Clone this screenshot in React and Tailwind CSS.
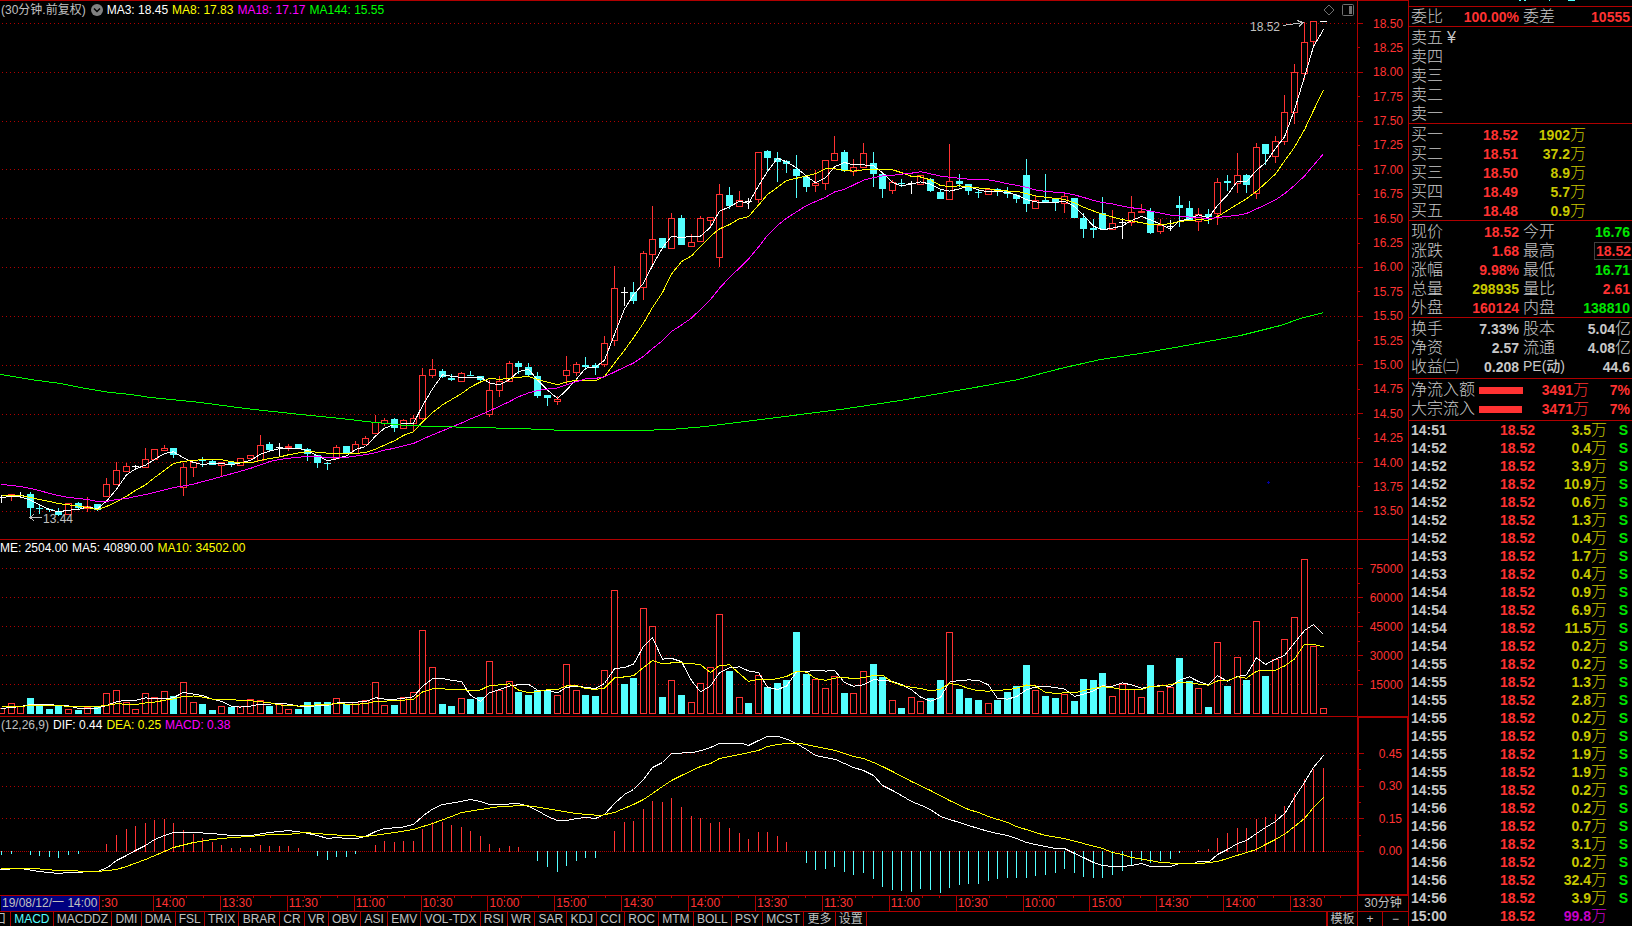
import { useState } from "react";

const RED = "#ff3232";
const CYAN = "#54ffff";
const GRID = "#b00000";
const STEP = 9.578;

// kind, body top, body bottom, high, low, volume top, macd bar end
// r = rising, c = falling, w = flat, v = flat with a falling volume bar
const candles = [
  ["w", 497, 497, 495, 502, 708, 854],
  ["r", 494, 495, 494, 500, 703, 853],
  ["w", 495, 495, 492, 497, 706, 851],
  ["c", 494, 508, 492, 518, 698, 854],
  ["c", 508, 509, 504, 514, 705, 855],
  ["c", 509, 510, 509, 512, 709, 856],
  ["c", 511, 515, 508, 516, 706, 857],
  ["r", 503, 514, 503, 514, 709, 854],
  ["c", 503, 508, 502, 509, 710, 853],
  ["r", 506, 508, 497, 511, 707, 851],
  ["c", 504, 510, 504, 511, 706, 851],
  ["r", 484, 496, 478, 496, 693, 844],
  ["r", 470, 484, 462, 484, 690, 835],
  ["r", 466, 471, 463, 471, 702, 829],
  ["w", 466, 466, 465, 469, 709, 826],
  ["r", 459, 467, 448, 467, 693, 823],
  ["r", 449, 459, 449, 459, 697, 820],
  ["r", 448, 450, 445, 450, 691, 819],
  ["c", 448, 455, 448, 458, 696, 823],
  ["r", 467, 487, 463, 495, 682, 830],
  ["r", 462, 467, 462, 476, 702, 834],
  ["c", 460, 461, 457, 467, 704, 838],
  ["c", 461, 465, 460, 465, 710, 842],
  ["r", 462, 465, 462, 475, 706, 845],
  ["c", 462, 465, 462, 467, 707, 848],
  ["r", 458, 465, 458, 465, 706, 848],
  ["r", 455, 458, 455, 458, 699, 848],
  ["r", 445, 460, 435, 460, 700, 845],
  ["c", 444, 450, 442, 452, 706, 846],
  ["w", 447, 447, 443, 455, 704, 846],
  ["r", 446, 447, 444, 450, 709, 846],
  ["c", 444, 449, 444, 449, 709, 848],
  ["c", 449, 454, 448, 461, 702, 851],
  ["c", 455, 463, 455, 468, 702, 855],
  ["c", 463, 464, 462, 470, 702, 859],
  ["r", 447, 458, 445, 458, 698, 856],
  ["c", 446, 454, 446, 454, 704, 856],
  ["r", 444, 453, 441, 453, 702, 853],
  ["r", 438, 444, 436, 444, 700, 851],
  ["r", 422, 433, 415, 433, 682, 845],
  ["r", 420, 423, 418, 425, 705, 841],
  ["c", 419, 428, 418, 432, 705, 842],
  ["r", 420, 428, 419, 428, 697, 841],
  ["r", 418, 423, 415, 430, 692, 841],
  ["r", 375, 418, 368, 419, 630, 829],
  ["r", 369, 375, 359, 377, 667, 822],
  ["c", 371, 377, 369, 378, 704, 822],
  ["c", 378, 380, 374, 381, 706, 825],
  ["r", 373, 381, 372, 381, 698, 827],
  ["c", 375, 376, 371, 376, 699, 831],
  ["c", 376, 380, 376, 381, 697, 836],
  ["r", 390, 414, 380, 416, 661, 844],
  ["r", 381, 390, 376, 396, 690, 848],
  ["r", 363, 381, 361, 381, 681, 846],
  ["c", 363, 367, 361, 374, 692, 847],
  ["c", 367, 375, 363, 376, 695, 851],
  ["c", 376, 396, 372, 398, 690, 860],
  ["c", 395, 398, 395, 406, 690, 866],
  ["r", 399, 401, 396, 404, 695, 871],
  ["r", 370, 375, 356, 384, 664, 865],
  ["r", 364, 372, 362, 375, 690, 860],
  ["c", 365, 367, 357, 370, 695, 857],
  ["c", 365, 368, 363, 375, 696, 857],
  ["r", 343, 364, 336, 366, 670, 851],
  ["r", 288, 340, 266, 345, 590, 831],
  ["v", 292, 292, 287, 305, 684, 822],
  ["c", 292, 301, 282, 304, 678, 821],
  ["r", 253, 287, 251, 299, 608, 809],
  ["r", 239, 254, 206, 264, 626, 801],
  ["c", 238, 248, 238, 249, 697, 802],
  ["r", 218, 248, 213, 248, 680, 798],
  ["c", 218, 245, 215, 245, 695, 807],
  ["r", 242, 246, 234, 246, 702, 816],
  ["r", 218, 241, 216, 241, 683, 818],
  ["r", 217, 220, 217, 226, 667, 823],
  ["r", 194, 257, 184, 266, 614, 822],
  ["c", 195, 206, 187, 209, 671, 828],
  ["r", 200, 206, 191, 206, 697, 833],
  ["v", 201, 201, 198, 208, 703, 839],
  ["r", 152, 199, 152, 202, 675, 832],
  ["c", 151, 158, 150, 171, 687, 832],
  ["c", 158, 162, 152, 182, 683, 836],
  ["c", 161, 164, 160, 173, 680, 842],
  ["c", 169, 176, 155, 198, 632, 851],
  ["c", 177, 187, 176, 192, 674, 862],
  ["r", 183, 185, 170, 191, 679, 869],
  ["r", 160, 183, 160, 189, 688, 868],
  ["r", 153, 160, 136, 160, 676, 866],
  ["c", 152, 171, 150, 172, 693, 871],
  ["r", 167, 171, 159, 175, 693, 874],
  ["r", 153, 167, 143, 167, 671, 872],
  ["c", 163, 174, 152, 187, 664, 878],
  ["c", 174, 189, 172, 198, 677, 886],
  ["r", 182, 190, 180, 193, 700, 889],
  ["c", 183, 184, 179, 187, 708, 890],
  ["w", 183, 183, 181, 193, 697, 891],
  ["r", 175, 184, 175, 184, 701, 888],
  ["c", 179, 191, 178, 192, 698, 889],
  ["c", 192, 199, 190, 199, 680, 892],
  ["r", 181, 199, 144, 199, 632, 887],
  ["c", 181, 184, 174, 187, 689, 884],
  ["c", 184, 191, 184, 195, 698, 883],
  ["c", 192, 193, 190, 198, 700, 883],
  ["r", 189, 194, 189, 194, 703, 880],
  ["c", 189, 191, 188, 196, 700, 878],
  ["c", 191, 194, 187, 198, 692, 877],
  ["c", 195, 199, 194, 203, 686, 877],
  ["c", 175, 204, 159, 212, 665, 877],
  ["r", 200, 208, 196, 208, 690, 875],
  ["c", 200, 202, 174, 202, 696, 874],
  ["c", 199, 203, 199, 211, 698, 872],
  ["r", 196, 203, 194, 212, 694, 868],
  ["c", 198, 218, 198, 218, 701, 872],
  ["c", 218, 229, 213, 238, 679, 876],
  ["c", 228, 230, 219, 238, 680, 877],
  ["c", 213, 229, 197, 229, 673, 877],
  ["r", 223, 229, 210, 229, 696, 874],
  ["w", 222, 222, 218, 238, 684, 870],
  ["r", 212, 222, 196, 225, 689, 864],
  ["r", 211, 212, 204, 212, 697, 860],
  ["c", 211, 233, 208, 234, 665, 862],
  ["r", 225, 231, 219, 233, 691, 860],
  ["w", 226, 226, 220, 230, 687, 858],
  ["c", 205, 208, 196, 227, 658, 852],
  ["c", 208, 220, 201, 220, 681, 851],
  ["r", 214, 221, 208, 230, 688, 850],
  ["c", 214, 217, 209, 224, 707, 849],
  ["r", 182, 213, 178, 224, 642, 838],
  ["c", 181, 183, 175, 191, 686, 833],
  ["r", 175, 183, 153, 192, 657, 828],
  ["c", 175, 185, 174, 193, 680, 828],
  ["r", 147, 193, 143, 198, 621, 819],
  ["c", 144, 154, 144, 165, 676, 817],
  ["r", 141, 156, 136, 162, 659, 814],
  ["r", 112, 141, 95, 144, 639, 806],
  ["r", 72, 112, 64, 123, 617, 793],
  ["r", 42, 73, 22, 79, 559, 779],
  ["r", 21, 41, 21, 45, 646, 769],
  ["w", 21, 21, 21, 21, 708, 768],
];

const ma144 =
  "0,374 30,379 60,383 85,388 110,392 130,394 150,397 200,402 245,408 300,414 340,418 375,422 405,425 435,426 475,427 515,428 545,429 562,430 637,430 670,429 705,426 745,421 800,414 840,409 860,406 900,400 945,392 980,386 1018,379 1060,368 1100,359 1140,353 1180,346 1240,335 1280,325 1300,318 1323,312";

const dif =
  "0,869 20,868 39,871 58,873 68,872 97,871 107,867 116,860 126,855 135,850 145,845 154,839 164,835 173,832 193,832 212,833 231,835 250,835 269,832 288,830 303,832 317,835 327,838 337,837 346,838 356,838 365,836 375,831 384,828 400,827 413,824 423,815 433,808 442,804 455,802 470,799 480,801 489,804 500,804 518,803 528,806 537,810 547,816 557,820 566,820 576,818 585,817 595,818 604,814 614,803 624,794 633,789 643,779 652,767 662,762 671,753 692,752 701,750 710,747 719,743 742,743 748,745 758,740 767,736 778,736 787,739 796,743 806,749 815,755 825,757 835,759 844,763 853,767 863,770 873,775 882,785 892,790 901,795 911,801 921,805 930,809 940,816 949,819 959,822 968,825 978,828 988,831 997,833 1007,835 1016,838 1026,842 1035,844 1055,848 1064,848 1074,853 1083,857 1093,862 1102,865 1112,866 1122,866 1131,865 1141,863 1150,866 1170,866 1179,863 1193,863 1198,861 1209,861 1217,854 1227,849 1237,843 1246,840 1256,833 1265,827 1275,821 1285,812 1294,797 1304,782 1313,767 1323,755";

const dea =
  "0,868 33,868 58,870 97,871 107,870 116,869 126,866 145,859 164,851 173,847 193,842 212,839 231,837 250,836 269,834 288,834 303,832 317,833 327,834 346,835 365,836 380,834 394,832 413,829 432,823 451,816 461,812 480,809 500,806 525,805 540,807 557,810 575,813 600,815 614,812 633,804 643,799 652,793 662,786 671,780 681,775 700,766 710,763 719,758 729,756 739,754 758,750 767,746 777,744 787,743 800,743 815,746 835,750 853,756 863,758 873,762 882,766 892,771 911,781 930,790 949,800 968,809 978,812 988,816 1007,822 1016,826 1035,832 1045,835 1064,838 1083,843 1102,848 1112,852 1122,854 1131,857 1150,860 1160,862 1179,863 1200,863 1217,861 1227,858 1246,852 1256,849 1265,844 1275,839 1285,833 1294,826 1304,818 1313,807 1323,797";

const xOf = (i) => Math.round(1 + STEP * i);

const closes = candles.map(([k, top, bottom]) => (k === "c" ? bottom : top + 1));
const volumes = candles.map((c) => c[5]);

// moving average; seed holds the values that need earlier bars
function average(values, n, seed) {
  return values
    .map((_, i) => {
      if (i < n - 1) return `${xOf(i)},${seed[i]}`;
      const part = values.slice(i - n + 1, i + 1);
      return `${xOf(i)},${part.reduce((a, b) => a + b, 0) / n}`;
    })
    .join(" ");
}

const ma3 = average(closes, 3, [497, 496]);
const ma8 = average(closes, 8, [495, 495, 495, 497, 499, 501, 503]);
const ma18 = average(
  closes,
  18,
  [484, 485, 486, 488, 490, 493, 495, 497, 498, 499, 501, 501, 499, 498, 496, 494, 492]
);
const vol5 = average(volumes, 5, [708, 707, 706, 704]);
const vol10 = average(volumes, 10, [706, 706, 706, 705, 705, 705, 705, 706, 706]);

const priceTicks = Array.from({ length: 21 }, (_, i) => (18.5 - i * 0.25).toFixed(2));
const volumeTicks = ["75000", "", "60000", "", "45000", "", "30000", "", "15000"];
const macdTicks = ["0.45", "", "0.30", "", "0.15", "", "0.00"];

const times = [
  "14:00", "13:30", "11:30", "11:00", "10:30", "10:00", "15:00", "14:30", "14:00",
  "13:30", "11:30", "11:00", "10:30", "10:00", "15:00", "14:30", "14:00", "13:30",
];

const tabs = [
  "MACD", "MACDDZ", "DMI", "DMA", "FSL", "TRIX", "BRAR", "CR", "VR", "OBV", "ASI", "EMV",
  "VOL-TDX", "RSI", "WR", "SAR", "KDJ", "CCI", "ROC", "MTM", "BOLL", "PSY", "MCST", "更多", "设置",
];

const buys = [
  ["买一", "18.52", "1902"],
  ["买二", "18.51", "37.2"],
  ["买三", "18.50", "8.9"],
  ["买四", "18.49", "5.7"],
  ["买五", "18.48", "0.9"],
];

const R = "text-[#ff3232]";
const G = "text-[#00e600]";
const Y = "text-[#c8c800]";
const W = "text-[#c8c8c8]";

const quotes = [
  ["现价", "18.52", R, "今开", "16.76", G],
  ["涨跌", "1.68", R, "最高", "18.52", R],
  ["涨幅", "9.98%", R, "最低", "16.71", G],
  ["总量", "298935", Y, "量比", "2.61", R],
  ["外盘", "160124", R, "内盘", "138810", G],
];

const basics = [
  ["换手", "7.33%", W, "股本", "5.04亿", W],
  ["净资", "2.57", W, "流通", "4.08亿", W],
  ["收益㈡", "0.208", W, "PE(动)", "44.6", W],
];

const trades = [
  ["14:51", "3.5"], ["14:52", "0.4"], ["14:52", "3.9"], ["14:52", "10.9"],
  ["14:52", "0.6"], ["14:52", "1.3"], ["14:52", "0.4"], ["14:53", "1.7"],
  ["14:53", "0.4"], ["14:54", "0.9"], ["14:54", "6.9"], ["14:54", "11.5"],
  ["14:54", "0.2"], ["14:55", "0.2"], ["14:55", "1.3"], ["14:55", "2.8"],
  ["14:55", "0.2"], ["14:55", "0.9"], ["14:55", "1.9"], ["14:55", "1.9"],
  ["14:55", "0.2"], ["14:56", "0.2"], ["14:56", "0.7"], ["14:56", "3.1"],
  ["14:56", "0.2"], ["14:56", "32.4"], ["14:56", "3.9"], ["15:00", "99.8"],
];

function GridLines({ rows }) {
  return rows.map((y) => (
    <line key={y} x1="2" x2="1357" y1={y + 0.5} y2={y + 0.5} stroke={GRID} strokeDasharray="1 3" />
  ));
}

function Curve({ points, color }) {
  return (
    <polyline points={points} fill="none" stroke={color} transform="translate(0.5 0.5)" />
  );
}

function Candle({ data, x }) {
  const [kind, top, bottom, high, low] = data;

  if (kind === "w" || kind === "v") {
    return (
      <g fill="#fff">
        <rect x={x} y={high} width="1" height={low - high + 1} />
        <rect x={x - 3} y={top} width="7" height="1" />
      </g>
    );
  }

  if (kind === "c") {
    return (
      <g fill={CYAN}>
        <rect x={x} y={high} width="1" height={low - high} />
        <rect x={x - 3} y={top} width="7" height={Math.max(bottom - top, 1)} />
      </g>
    );
  }

  return (
    <g>
      <rect x={x} y={high} width="1" height={low - high + 1} fill={RED} />
      <rect x={x - 2.5} y={top + 0.5} width="6" height={bottom - top} fill="#000" stroke={RED} />
    </g>
  );
}

function VolumeBar({ data, x }) {
  const top = data[5];
  if (data[0] === "c" || data[0] === "v") {
    return <rect x={x - 3} y={top} width="7" height={714 - top} fill={CYAN} />;
  }
  return (
    <rect x={x - 2.5} y={top + 0.5} width="6" height={713 - top} fill="#000" stroke={RED} />
  );
}

function MacdBar({ end, x }) {
  if (end === 851) return null;
  const up = end < 851;
  return (
    <rect
      x={x}
      y={up ? end : 851}
      width="1"
      height={Math.abs(end - 851) + 1}
      fill={up ? RED : CYAN}
    />
  );
}

function Axis({ ticks, className }) {
  return (
    <div
      className={`flex w-[51px] shrink-0 flex-col justify-between border-[#b00000] pr-[5px] text-[#ff3232] ${className}`}
    >
      {ticks.map((tick, i) => (
        <div key={i} className="flex h-px items-center justify-between">
          <span className={`h-px bg-[#b00000] ${i % 2 ? "w-[2px]" : "w-[5px]"}`} />
          <span>{tick}</span>
        </div>
      ))}
    </div>
  );
}

function QuoteTable({ rows, className }) {
  return (
    <div className={`border-b border-[#b00000] ${className}`}>
      <table className="w-full table-fixed">
        <colgroup>
          <col className="w-[48px]" />
          <col className="w-[62px]" />
          <col className="w-[48px]" />
          <col />
        </colgroup>
        <tbody>
          {rows.map(([a, av, ac, b, bv, bc]) => (
            <tr key={a} className="h-[19px] whitespace-nowrap">
              <th className="pl-[2px] text-left text-base leading-[19px] font-light">{a}</th>
              <td className={`text-right font-bold ${ac}`}>{av}</td>
              <th
                className={`pl-1 text-left leading-[19px] ${
                  b === "PE(动)" ? "text-sm font-medium" : "text-base font-light"
                }`}
              >
                {b}
              </th>
              <td className={`text-right font-bold ${bc}`}>
                <span className={b === "最高" ? "px-px outline outline-[#404040]" : "pr-[2px]"}>
                  {bv.replace("亿", "")}
                  {bv.endsWith("亿") && (
                    <span className="-mr-px text-base leading-[18px] font-light">亿</span>
                  )}
                </span>
              </td>
            </tr>
          ))}
        </tbody>
      </table>
    </div>
  );
}

function SidePanel() {
  return (
    <aside className="w-[223px] shrink-0 overflow-hidden text-sm leading-[18px] text-[#c8c8c8]">
      <div className="h-[7px] border-b border-[#b00000]">
        <svg className="ml-[110px] block h-[2px] w-[60px]" viewBox="0 0 60 2">
          <path d="M0 0h2v1h-2zM5 0h2v1h-2zM30 0h1v1h-1zM49 0h7v1h-7z" fill={CYAN} />
        </svg>
      </div>

      <QuoteTable rows={[["委比", "100.00%", R, "委差", "10555", R]]} className="h-5" />

      {/* ASKS */}
      <div className="h-[97px] border-b border-[#b00000] pt-px">
        <table className="w-full">
          <tbody>
            {["卖五", "卖四", "卖三", "卖二", "卖一"].map((name) => (
              <tr key={name} className="h-[19px]">
                <th className="pl-[2px] text-left text-base leading-[19px] font-light">
                  {name}
                  {name === "卖五" && <span className="ml-1">¥</span>}
                </th>
              </tr>
            ))}
          </tbody>
        </table>
      </div>

      {/* BIDS */}
      <div className="h-[97px] border-b border-[#b00000] pt-px">
        <table className="w-full table-fixed">
          <colgroup>
            <col className="w-[48px]" />
            <col className="w-[61px]" />
            <col className="w-[68px]" />
            <col />
          </colgroup>
          <tbody>
            {buys.map(([name, price, amount]) => (
              <tr key={name} className="h-[19px]">
                <th className="pl-[2px] text-left text-base leading-[19px] font-light">{name}</th>
                <td className={`text-right font-bold ${R}`}>{price}</td>
                <td className={`text-right font-bold ${Y}`}>
                  {amount}
                  <span className="text-base leading-[18px] font-light">万</span>
                </td>
                <td />
              </tr>
            ))}
          </tbody>
        </table>
      </div>

      <QuoteTable rows={quotes} className="h-[97px] pt-px" />
      <QuoteTable rows={basics} className="h-[61px] pt-px" />

      {/* MONEY FLOW */}
      <div className="flex h-[42px] flex-col justify-center border-b border-[#b00000]">
        {[["净流入额", "3491", "w-[44px]"], ["大宗流入", "3471", "w-[43px]"]].map(([name, value, width]) => (
          <div key={name} className="flex h-[19px] items-center pr-[2px] pl-[2px]">
            <span className="w-[68px] text-base font-light">{name}</span>
            <span className={`h-[7px] bg-[#ff3232] ${width}`} />
            <span className={`ml-auto font-bold ${R}`}>
              {value}
              <span className="text-base leading-[18px] font-light">万</span>
            </span>
            <span className={`w-[41px] text-right font-bold ${R}`}>7%</span>
          </div>
        ))}
      </div>

      {/* TRADES */}
      <table className="w-full table-fixed font-bold">
        <colgroup>
          <col className="w-[48px]" />
          <col className="w-[78px]" />
          <col className="w-[72px]" />
          <col />
        </colgroup>
        <tbody>
          {trades.map(([time, amount], i) => {
            const last = i === trades.length - 1;
            return (
              <tr key={i} className="h-[18px]">
                <td className="pl-[2px]">{time}</td>
                <td className={`text-right ${R}`}>18.52</td>
                <td className={`text-right ${last ? "text-[#c800c8]" : Y}`}>
                  {amount}
                  <span className="text-base leading-[18px] font-light">万</span>
                </td>
                <td className={`pr-1 text-right ${G}`}>{last ? "" : "S"}</td>
              </tr>
            );
          })}
        </tbody>
      </table>
    </aside>
  );
}

function App() {
  const [tab, setTab] = useState("MACD");

  return (
    <div className="flex h-screen overflow-hidden bg-black font-['Liberation_Sans','Noto_Sans_CJK_SC',sans-serif] text-xs text-[#c0c0c0]">
      <main className="flex min-w-0 flex-1 flex-col border-t border-r border-[#b00000]">

        {/* PRICE */}
        <section className="relative flex min-h-0 flex-[538] border-b border-[#b00000]">
          <svg
            className="block h-full min-w-0 flex-1"
            viewBox="0 1 1357 538"
            preserveAspectRatio="none"
            shapeRendering="crispEdges"
          >
            <GridLines rows={[23, 72, 121, 169, 218, 267, 316, 365, 414, 462, 511]} />
            {candles.map((c, i) => (
              <Candle key={i} data={c} x={xOf(i)} />
            ))}
            <Curve points={ma3} color="#ffffff" />
            <Curve points={ma8} color="#ffff00" />
            <Curve points={ma18} color="#ff00ff" />
            <Curve points={ma144} color="#00ff00" />
            <path d="M1283 25.5l20-3M1297 20.5l6 2l-4 4" fill="none" stroke="#c0c0c0" />
            <path d="M42 517.5h-12M34 514.5l-4 3l4 3" fill="none" stroke="#c0c0c0" />
            <path d="M1267 482h3v1h-3z" fill="#0000a0" />
            <path d="M1268 481h1v3h-1z" fill="#0000a0" />
            <text x="1250" y="31" fontSize="12" fill="#c0c0c0">18.52</text>
            <text x="43" y="523" fontSize="12" fill="#c0c0c0">13.44</text>
          </svg>
          <Axis ticks={priceTicks} className="border-l pt-[22px] pb-[27px]" />

          <div className="absolute top-0 left-0 flex h-[18px] items-center gap-1 pl-px">
            <span>(30分钟.前复权)</span>
            <button type="button" aria-label="指标设置" className="ml-px">
              <svg className="block size-3" viewBox="0 0 12 12">
                <circle cx="6" cy="6" r="6" fill="#808080" />
                <path d="M3 4.5l3 3l3-3" fill="none" stroke="#000" strokeWidth="1.5" />
              </svg>
            </button>
            <span className="text-white">MA3: 18.45</span>
            <span className="text-[#ffff00]">MA8: 17.83</span>
            <span className="text-[#ff00ff]">MA18: 17.17</span>
            <span className="text-[#00ff00]">MA144: 15.55</span>
          </div>

          <div className="absolute top-[3px] right-[54px] flex items-center gap-[7px]">
            <button type="button" aria-label="标记">
              <svg className="block size-3" viewBox="0 0 12 12">
                <path d="M6 1l5 5l-5 5l-5-5z" fill="none" stroke="#707070" />
              </svg>
            </button>
            <button type="button" aria-label="侧栏">
              <svg className="block size-3" viewBox="0 0 12 12">
                <rect x="0.5" y="0.5" width="11" height="11" rx="1" fill="none" stroke="#707070" />
                <rect x="7" y="2" width="3" height="8" fill="#707070" />
              </svg>
            </button>
          </div>
        </section>

        {/* VOLUME */}
        <section className="relative flex min-h-0 flex-[176] border-b border-[#b00000]">
          <svg
            className="block h-full min-w-0 flex-1"
            viewBox="0 540 1357 176"
            preserveAspectRatio="none"
            shapeRendering="crispEdges"
          >
            <GridLines rows={[568, 597, 626, 655, 684]} />
            {candles.map((c, i) => (
              <VolumeBar key={i} data={c} x={xOf(i)} />
            ))}
            <Curve points={vol5} color="#ffffff" />
            <Curve points={vol10} color="#ffff00" />
          </svg>
          <Axis ticks={volumeTicks} className="border-l pt-[28px] pb-[31px]" />

          <div className="absolute top-0 left-0 flex h-4 items-center gap-1 text-white">
            <span>ME: 2504.00</span>
            <span>MA5: 40890.00</span>
            <span className="text-[#ffff00]">MA10: 34502.00</span>
          </div>
        </section>

        {/* MACD */}
        <section className="relative flex min-h-0 flex-[178] border-b border-[#b00000]">
          <svg
            className="block h-full min-w-0 flex-1"
            viewBox="0 717 1357 178"
            preserveAspectRatio="none"
            shapeRendering="crispEdges"
          >
            <GridLines rows={[753, 786, 818]} />
            <line x1="0" x2="1357" y1="851.5" y2="851.5" stroke={GRID} strokeDasharray="1 1" />
            {candles.map((c, i) => (
              <MacdBar key={i} end={c[6]} x={xOf(i)} />
            ))}
            <Curve points={dif} color="#ffffff" />
            <Curve points={dea} color="#ffff00" />
          </svg>
          <Axis ticks={macdTicks} className="border-t border-r border-b border-l-2 pt-[35px] pb-[42px]" />

          <div className="absolute top-0 left-0 flex h-4 items-center gap-1 pl-px">
            <span>(12,26,9)</span>
            <span className="text-white">DIF: 0.44</span>
            <span className="text-[#ffff00]">DEA: 0.25</span>
            <span className="text-[#ff00ff]">MACD: 0.38</span>
          </div>
        </section>

        {/* TIME */}
        <div className="flex h-4 shrink-0 border-b border-[#b00000] leading-[15px] text-[#ff3232]">
          <div className="flex min-w-0 flex-1">
            <span className="ml-px w-[98px] shrink-0 bg-[#000080] pl-px whitespace-nowrap text-[#c0c0c0]">
              19/08/12/一 14:00
            </span>
            <span className="w-[54px] shrink-0 border-l border-[#b00000] pl-px">:30</span>
            {times.map((time, i) => (
              <div key={i} className="relative min-w-0 flex-1 border-l border-[#b00000] pl-px">
                {time}
                <div className="absolute inset-x-0 top-0 flex justify-evenly">
                  <span className="h-[2px] w-px bg-[#b00000]" />
                  <span className="h-[2px] w-px bg-[#b00000]" />
                  <span className="h-[2px] w-px bg-[#b00000]" />
                </div>
              </div>
            ))}
          </div>
          <button type="button" className="w-[51px] shrink-0 border-l border-[#b00000] text-[#c0c0c0]">
            30分钟
          </button>
        </div>

        {/* TABS */}
        <nav className="flex h-[14px] shrink-0 leading-[14px]">
          <button type="button" className="flex w-[10px] justify-end overflow-hidden pr-1">口</button>
          <div className="flex w-[857px] border-r border-[#b00000]">
            {tabs.map((name) => (
              <button
                key={name}
                type="button"
                onClick={() => setTab(name)}
                className={`flex-auto border-l border-[#b00000] whitespace-nowrap ${
                  name === tab ? "text-[#54ffff]" : ""
                }`}
              >
                {name}
              </button>
            ))}
          </div>
          <button type="button" className="ml-auto w-[31px] border-l-2 border-[#b00000]">模板</button>
          <button type="button" className="w-[25px] border-l border-[#b00000]">+</button>
          <button type="button" className="w-[26px] border-l border-[#b00000]">−</button>
        </nav>
      </main>

      <SidePanel />
    </div>
  );
}

export default App;
